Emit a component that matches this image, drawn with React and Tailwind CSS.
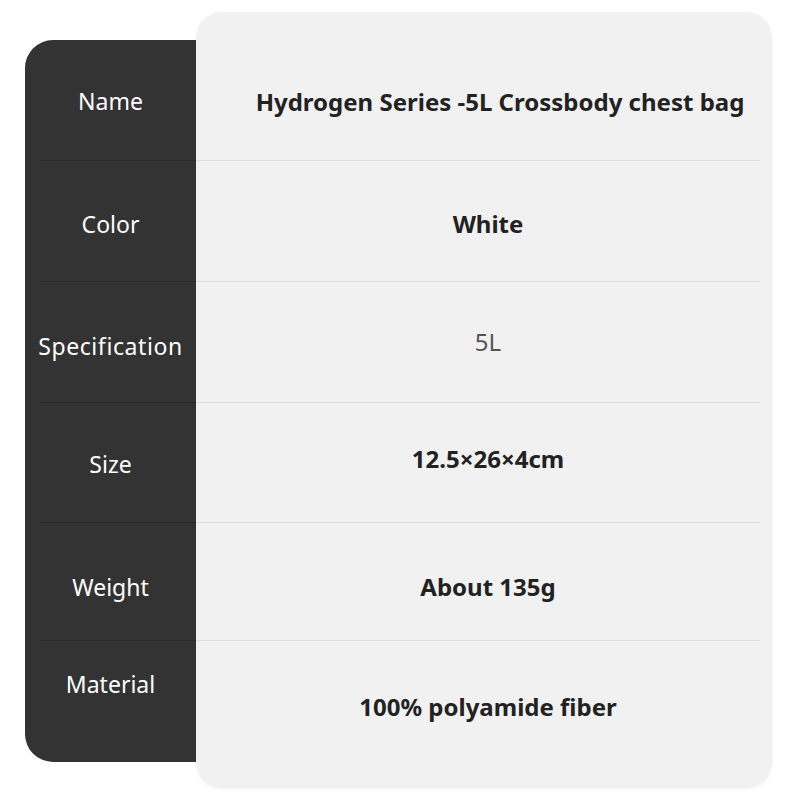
const labels = [
  { text: 'Name', cls: 'h-[120px] pt-[3px]' },
  { text: 'Color', cls: 'h-[121px] pt-[6px]' },
  { text: 'Specification', cls: 'h-[121px] pt-[8px]' },
  { text: 'Size', cls: 'h-[120px] pt-[4px]' },
  { text: 'Weight', cls: 'h-[118px] pt-[12px]' },
  { text: 'Material', cls: 'h-[122px] pb-[34px]' },
];

const values = [
  { text: 'Hydrogen Series -5L Crossbody chest bag', cls: 'h-[148px] pt-[32px] pl-[44px]', bold: true },
  { text: 'White', cls: 'h-[121px] pt-[5px] pl-[20px]', bold: true },
  { text: '5L', cls: 'h-[121px] pb-[1px] pl-[20px]', bold: false },
  { text: '12.5×26×4cm', cls: 'h-[120px] pb-[8px] pl-[20px]', bold: true },
  { text: 'About 135g', cls: 'h-[118px] pt-[10px] pl-[20px]', bold: true },
  { text: '100% polyamide fiber', cls: 'h-[148px] pb-[16px] pl-[20px]', bold: true },
];

export default function App() {
  return (
    <div
      className="w-[800px] h-[800px] bg-white flex pl-[25px] pt-[12px]"
      style={{ fontFamily: '"Noto Sans", "Open Sans", sans-serif' }}
    >
      {/* left label column */}
      <div className="w-[171px] h-[722px] mt-[28px] bg-[#333333] rounded-l-[28px] flex flex-col">
        {labels.map((l, i) => (
          <div
            key={l.text}
            className={`${l.cls} flex items-center justify-center ${i > 0 ? 'border-t border-[#2c2c2c] ml-[15px]' : ''}`}
          >
            <span
              className={`${i === 2 ? 'text-[23px] tracking-[0.6px]' : 'text-[23px]'} text-white leading-none ${i > 0 ? '-ml-[15px]' : ''}`}
            >
              {l.text}
            </span>
          </div>
        ))}
      </div>

      {/* right value panel */}
      <div className="w-[576px] h-[776px] bg-[#f1f1f1] rounded-[26px] shadow-[0_1px_3px_rgba(0,0,0,0.06)] flex flex-col pr-[12px]">
        {values.map((v, i) => (
          <div
            key={v.text}
            className={`${v.cls} flex items-center justify-center ${i > 0 ? 'border-t border-[#dcdcdc]' : ''}`}
          >
            <span
              className={
                v.bold
                  ? 'text-[24px] font-bold text-[#222222] leading-none'
                  : 'text-[24px] text-[#555555] leading-none'
              }
            >
              {v.text}
            </span>
          </div>
        ))}
      </div>
    </div>
  );
}
